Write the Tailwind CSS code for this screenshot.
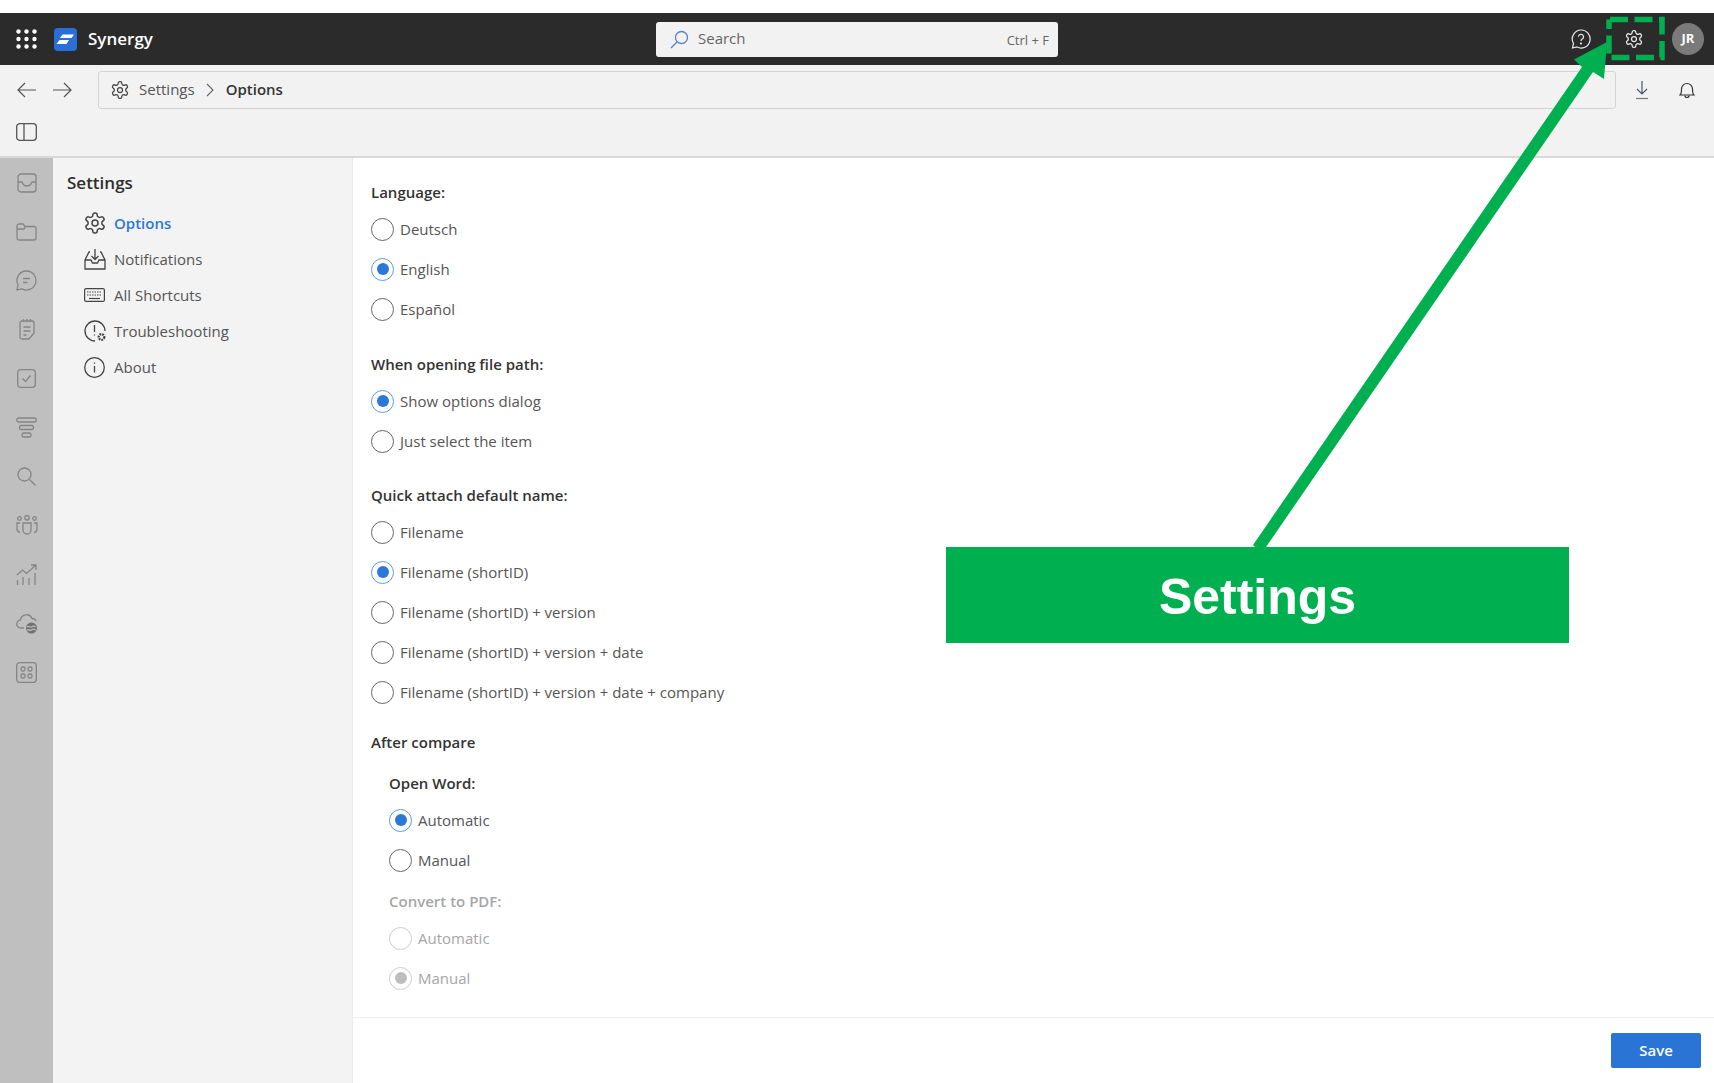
<!DOCTYPE html>
<html lang="en">
<head>
  <meta charset="UTF-8" />
  <title>Synergy Settings</title>
  <script src="https://cdn.jsdelivr.net/npm/@tailwindcss/browser@4"></script>
</head>
<body class="relative w-[1714px] h-[1083px] overflow-hidden bg-white font-['Open_Sans',sans-serif] text-[15px] text-[#555]">
  <svg class="hidden">
    <symbol id="gear" viewBox="0 0 24 24" fill="none" stroke="currentColor" stroke-width="1.5">
      <path d="M12.22 2h-.44a2 2 0 0 0-2 2v.18a2 2 0 0 1-1 1.73l-.43.25a2 2 0 0 1-2 0l-.15-.08a2 2 0 0 0-2.73.73l-.22.38a2 2 0 0 0 .73 2.73l.15.1a2 2 0 0 1 1 1.72v.51a2 2 0 0 1-1 1.74l-.15.09a2 2 0 0 0-.73 2.73l.22.38a2 2 0 0 0 2.73.73l.15-.08a2 2 0 0 1 2 0l.43.25a2 2 0 0 1 1 1.73V20a2 2 0 0 0 2 2h.44a2 2 0 0 0 2-2v-.18a2 2 0 0 1 1-1.73l.43-.25a2 2 0 0 1 2 0l.15.08a2 2 0 0 0 2.73-.73l.22-.39a2 2 0 0 0-.73-2.73l-.15-.08a2 2 0 0 1-1-1.74v-.5a2 2 0 0 1 1-1.74l.15-.09a2 2 0 0 0 .73-2.73l-.22-.38a2 2 0 0 0-2.73-.73l-.15.08a2 2 0 0 1-2 0l-.43-.25a2 2 0 0 1-1-1.73V4a2 2 0 0 0-2-2z"/>
      <circle cx="12" cy="12" r="3"/>
    </symbol>
  </svg>

  <!-- Top bar -->
  <div class="mt-[13px] h-[52px] bg-[#2b2b2b] flex items-center relative">
    <svg class="ml-[16px] w-[21px] h-[20px] text-white" viewBox="0 0 21 20" fill="currentColor">
      <circle cx="2.5" cy="2.5" r="2.2"/><circle cx="10.5" cy="2.5" r="2.2"/><circle cx="18.5" cy="2.5" r="2.2"/>
      <circle cx="2.5" cy="10" r="2.2"/><circle cx="10.5" cy="10" r="2.2"/><circle cx="18.5" cy="10" r="2.2"/>
      <circle cx="2.5" cy="17.5" r="2.2"/><circle cx="10.5" cy="17.5" r="2.2"/><circle cx="18.5" cy="17.5" r="2.2"/>
    </svg>
    <svg class="ml-[17px] w-[23px] h-[23px]" viewBox="0 0 23 23">
      <rect width="23" height="23" rx="4" fill="#2a6fd8"/>
      <path d="M8.5 6.5H20L17.5 10H6Z M5.5 12H15L12.5 16H2.5Z" fill="#fff"/>
    </svg>
    <span class="ml-[11px] text-[17px] font-semibold text-white">Synergy</span>

    <div class="absolute left-[656px] top-[9px] w-[402px] h-[35px] bg-[#f2f2f2] rounded-[3px] flex items-center pl-[14px] pr-[9px]">
      <svg class="w-[19px] h-[19px] text-[#5b7fd0]" viewBox="0 0 19 19" fill="none" stroke="currentColor" stroke-width="1.3">
        <circle cx="11.5" cy="7.5" r="6"/><path d="M7 12 1 18"/>
      </svg>
      <span class="ml-[9px] mt-[-2px] text-[#666]">Search</span>
      <span class="ml-auto mt-[3px] text-[13px] text-[#666]">Ctrl + F</span>
    </div>

    <div class="ml-auto flex items-center text-[#e8e8e8]">
      <svg class="w-[20px] h-[20px]" viewBox="0 0 20 20" fill="none" stroke="currentColor" stroke-width="1.2">
        <path d="M10 1a9 9 0 1 1-4 17l-4.5 1L2.500 14.500A9 9 0 0 1 10 1Z"/>
        <path d="M7.500 7.800a2.500 2.500 0 1 1 3.700 2.200c-.8.500-1.200 1-1.200 2"/><circle cx="10" cy="14.500" r=".5"/>
      </svg>
      <svg class="ml-[33px] w-[20px] h-[20px]"><use href="#gear"/></svg>
      <div class="ml-[28px] mr-[10px] w-[32px] h-[32px] rounded-full bg-[#7a7a7a] flex items-center justify-center text-[13px] font-bold text-white">JR</div>
    </div>
  </div>

  <!-- Address bar and toolbar -->
  <div class="h-[93px] bg-[#f2f2f2] border-b-2 border-[#d9d9d9]">
    <div class="h-[50px] flex items-center text-[#555]">
      <svg class="ml-[17px] w-[20px] h-[16px]" viewBox="0 0 20 16" fill="none" stroke="currentColor" stroke-width="1.2"><path d="M19 8H1M8 1 1 8l7 7"/></svg>
      <svg class="ml-[15px] w-[20px] h-[16px]" viewBox="0 0 20 16" fill="none" stroke="currentColor" stroke-width="1.2"><path d="M1 8h18M12 1l7 7-7 7"/></svg>
      <div class="ml-[26px] w-[1518px] h-[38px] border border-[#d4d4d4] rounded-[3px] flex items-center pl-[11px]">
        <svg class="w-[20px] h-[20px] text-[#444]"><use href="#gear"/></svg>
        <span class="ml-[9px] mt-[-1px] text-[#555]">Settings</span>
        <svg class="ml-[11px] w-[8px] h-[14px] text-[#666]" viewBox="0 0 8 14" fill="none" stroke="currentColor" stroke-width="1.1"><path d="m1 1 6 6-6 6"/></svg>
        <span class="ml-[12px] mt-[-1px] font-semibold text-[#333]">Options</span>
      </div>
      <svg class="ml-[18px] w-[16px] h-[20px] text-[#4a5670]" viewBox="0 0 16 20" fill="none" stroke="currentColor" stroke-width="1.2"><path d="M8 1v13M3 9l5 5 5-5"/><path d="M2 18.500h12" stroke="#777"/></svg>
      <svg class="ml-[29px] w-[16px] h-[20px] text-[#333]" viewBox="0 0 16 20" fill="none" stroke="currentColor" stroke-width="1.2"><path d="M1 15c1.500-1 1.500-3 1.500-6a5.500 5.500 0 0 1 11 0c0 3 0 5 1.500 6Z"/><path d="M6 15.500a2 2 0 0 0 4 0"/></svg>
    </div>
    <svg class="ml-[16px] mt-[8px] w-[21px] h-[18px] text-[#555]" viewBox="0 0 21 18" fill="none" stroke="currentColor" stroke-width="1.3"><rect x=".7" y=".7" width="19.600" height="16.600" rx="3"/><path d="M8 1v16"/></svg>
  </div>

  <div class="flex h-[925px]">
    <!-- Icon rail -->
    <div class="w-[53px] bg-[#bfbfbf] flex flex-col items-center text-[#858585]">
      <div class="h-[49px] flex items-center justify-center"><svg class="w-[20px] h-[20px]" viewBox="0 0 20 20" fill="none" stroke="currentColor" stroke-width="1.300"><rect x="1" y="1" width="18" height="18" rx="3"/><path d="M1 9h4c1 3 2.500 4 5 4s4-1 5-4h4"/></svg></div>
      <div class="h-[49px] flex items-center justify-center"><svg class="w-[21px] h-[19px]" viewBox="0 0 21 19" fill="none" stroke="currentColor" stroke-width="1.300"><path d="M1 4a2 2 0 0 1 2-2h4l2 2.500h9a2 2 0 0 1 2 2V16a2 2 0 0 1-2 2H3a2 2 0 0 1-2-2Z M1 7h7l1.500-2.500"/></svg></div>
      <div class="h-[49px] flex items-center justify-center"><svg class="w-[21px] h-[21px]" viewBox="0 0 21 21" fill="none" stroke="currentColor" stroke-width="1.300"><path d="M10.500 1a9.500 9.500 0 1 1-4.500 17.900L1 20l1.100-5A9.500 9.500 0 0 1 10.500 1Z"/><path d="M7 8.500h7M7 12.500h4.500"/></svg></div>
      <div class="h-[49px] flex items-center justify-center"><svg class="w-[16px] h-[21px]" viewBox="0 0 16 21" fill="none" stroke="currentColor" stroke-width="1.300"><path d="M3 2h10a2 2 0 0 1 2 2v10l-5 6H3a2 2 0 0 1-2-2V4a2 2 0 0 1 2-2Z M4.500 0v3M8 0v3M11.500 0v3M4.500 8h7M4.500 12h7M4.500 16h3"/></svg></div>
      <div class="h-[49px] flex items-center justify-center"><svg class="w-[19px] h-[19px]" viewBox="0 0 19 19" fill="none" stroke="currentColor" stroke-width="1.300"><rect x=".7" y=".7" width="17.600" height="17.600" rx="3"/><path d="m5.500 9.500 3 3 5-6"/></svg></div>
      <div class="h-[49px] flex items-center justify-center"><svg class="w-[21px] h-[21px]" viewBox="0 0 21 21" fill="none" stroke="currentColor" stroke-width="1.300"><rect x=".7" y="1" width="19.600" height="4" rx="2"/><rect x="3.500" y="8.500" width="14" height="4" rx="2"/><rect x="6" y="16" width="9" height="4" rx="2"/></svg></div>
      <div class="h-[49px] flex items-center justify-center"><svg class="w-[19px] h-[19px]" viewBox="0 0 19 19" fill="none" stroke="currentColor" stroke-width="1.300"><circle cx="7.500" cy="7.500" r="6.500"/><path d="m12.500 12.500 6 6"/></svg></div>
      <div class="h-[49px] flex items-center justify-center"><svg class="w-[22px] h-[21px]" viewBox="0 0 22 21" fill="none" stroke="currentColor" stroke-width="1.300"><circle cx="11" cy="2.800" r="2.200"/><circle cx="3.500" cy="3.500" r="1.800"/><circle cx="18.500" cy="3.500" r="1.800"/><path d="M7 8h8v7a4 4 0 0 1-8 0Z M4 8H1v6c0 2 1 3 3 3.500 M18 8h3v6c0 2-1 3-3 3.500"/></svg></div>
      <div class="h-[49px] flex items-center justify-center"><svg class="w-[21px] h-[22px]" viewBox="0 0 21 22" fill="none" stroke="currentColor" stroke-width="1.300"><path d="M1 11 6.500 6l4 3.500L20 1M15 1h5v5M1.500 16v5M7 13v8M13 14v7M19 9v12"/></svg></div>
      <div class="h-[49px] flex items-center justify-center"><svg class="w-[22px] h-[21px]" viewBox="0 0 22 21" fill="none" stroke="currentColor" stroke-width="1.300"><path d="M8 15H5a4 4 0 0 1-.5-8A6 6 0 0 1 16 5.500a4 4 0 0 1 4 2.500"/><circle cx="15.500" cy="15" r="5.500" fill="#707070" stroke="none"/><path d="M11 14c2-2 3 1 4.500 0s3-1 4 0M11 17c2-1 3 1 4.500 0s3-1 4 0" stroke="#bfbfbf"/></svg></div>
      <div class="h-[49px] flex items-center justify-center"><svg class="w-[21px] h-[21px]" viewBox="0 0 21 21" fill="none" stroke="currentColor" stroke-width="1.300"><rect x=".7" y=".7" width="19.600" height="19.600" rx="3"/><rect x="5" y="5" width="4" height="4" rx="1.500"/><rect x="12" y="5" width="4" height="4" rx="1.500"/><rect x="5" y="12" width="4" height="4" rx="1.500"/><rect x="12" y="12" width="4" height="4" rx="1.500"/></svg></div>
    </div>

    <!-- Settings panel -->
    <div class="w-[300px] bg-[#f3f3f3] pl-[14px] pt-[11px] border-r border-[#ececec]">
      <div class="h-[28px] flex items-center text-[17px] font-semibold text-[#2e2e2e]">Settings</div>
      <div class="mt-[8px] ml-[16px] flex flex-col">
        <div class="h-[36px] flex items-center font-semibold text-[#2b78d6]"><svg class="w-[24px] h-[24px] text-[#444]"><use href="#gear"/></svg><span class="ml-[7px]">Options</span></div>
        <div class="h-[36px] flex items-center"><svg class="ml-[1px] w-[22px] h-[22px] text-[#444] mr-[8px]" viewBox="0 0 22 22" fill="none" stroke="currentColor" stroke-width="1.300"><path d="M6 4H5L1 12v9h20v-9l-4-8h-1M1 12h6l1.500 3h5L15 12h6M11 1v10M7.500 8l3.500 3.500L14.500 8"/></svg>Notifications</div>
        <div class="h-[36px] flex items-center"><svg class="ml-[1px] w-[21px] h-[14px] text-[#444] mr-[9px]" viewBox="0 0 21 14" fill="none" stroke="currentColor" stroke-width="1.200"><rect x=".6" y=".6" width="19.800" height="12.800" rx="1.500"/><path d="M3 4h15M3 7h15" stroke-dasharray="1.500 1"/><path d="M5 10.500h11"/></svg>All Shortcuts</div>
        <div class="h-[36px] flex items-center"><svg class="ml-[1px] w-[23px] h-[22px] text-[#444] mr-[7px]" viewBox="0 0 23 22" fill="none" stroke="currentColor" stroke-width="1.300"><path d="M11 21a10 10 0 1 1 10-10M10.500 5v7M10.500 14.500v1"/><circle cx="17.500" cy="17" r="2.800" stroke-width="2.300" stroke-dasharray="1.800 .9"/></svg>Troubleshooting</div>
        <div class="h-[36px] flex items-center"><svg class="ml-[1px] w-[21px] h-[21px] text-[#444] mr-[9px]" viewBox="0 0 21 21" fill="none" stroke="currentColor" stroke-width="1.300"><circle cx="10.500" cy="10.500" r="9.800"/><path d="M10.500 9v6.500M10.500 5.500v1.300"/></svg>About</div>
      </div>
    </div>

    <!-- Options form -->
    <div class="flex-1 flex flex-col">
      <div class="flex-1 pl-[18px] pt-[17px]">
        <div class="h-[34px] flex items-center font-semibold text-[#333]">Language:</div>
        <div class="h-10 flex items-center"><span class="w-[23px] h-[23px] rounded-full border-[1.5px] border-[#666]"></span><span class="ml-[6px]">Deutsch</span></div>
        <div class="h-10 flex items-center"><span class="w-[23px] h-[23px] rounded-full border-[1.5px] border-[#5b9be8] flex items-center justify-center"><span class="w-[12px] h-[12px] rounded-full bg-[#2b78d6]"></span></span><span class="ml-[6px]">English</span></div>
        <div class="h-10 flex items-center"><span class="w-[23px] h-[23px] rounded-full border-[1.5px] border-[#666]"></span><span class="ml-[6px]">Español</span></div>

        <div class="mt-[18px] h-[34px] flex items-center font-semibold text-[#333]">When opening file path:</div>
        <div class="h-10 flex items-center"><span class="w-[23px] h-[23px] rounded-full border-[1.5px] border-[#5b9be8] flex items-center justify-center"><span class="w-[12px] h-[12px] rounded-full bg-[#2b78d6]"></span></span><span class="ml-[6px]">Show options dialog</span></div>
        <div class="h-10 flex items-center"><span class="w-[23px] h-[23px] rounded-full border-[1.5px] border-[#666]"></span><span class="ml-[6px]">Just select the item</span></div>

        <div class="mt-[17px] h-[34px] flex items-center font-semibold text-[#333]">Quick attach default name:</div>
        <div class="h-10 flex items-center"><span class="w-[23px] h-[23px] rounded-full border-[1.5px] border-[#666]"></span><span class="ml-[6px]">Filename</span></div>
        <div class="h-10 flex items-center"><span class="w-[23px] h-[23px] rounded-full border-[1.5px] border-[#5b9be8] flex items-center justify-center"><span class="w-[12px] h-[12px] rounded-full bg-[#2b78d6]"></span></span><span class="ml-[6px]">Filename (shortID)</span></div>
        <div class="h-10 flex items-center"><span class="w-[23px] h-[23px] rounded-full border-[1.5px] border-[#666]"></span><span class="ml-[6px]">Filename (shortID) + version</span></div>
        <div class="h-10 flex items-center"><span class="w-[23px] h-[23px] rounded-full border-[1.5px] border-[#666]"></span><span class="ml-[6px]">Filename (shortID) + version + date</span></div>
        <div class="h-10 flex items-center"><span class="w-[23px] h-[23px] rounded-full border-[1.5px] border-[#666]"></span><span class="ml-[6px]">Filename (shortID) + version + date + company</span></div>

        <div class="mt-[13px] h-[34px] flex items-center font-semibold text-[#333]">After compare</div>
        <div class="ml-[18px]">
          <div class="mt-[7px] h-[34px] flex items-center font-semibold text-[#333]">Open Word:</div>
          <div class="h-10 flex items-center"><span class="w-[23px] h-[23px] rounded-full border-[1.5px] border-[#5b9be8] flex items-center justify-center"><span class="w-[12px] h-[12px] rounded-full bg-[#2b78d6]"></span></span><span class="ml-[6px]">Automatic</span></div>
          <div class="h-10 flex items-center"><span class="w-[23px] h-[23px] rounded-full border-[1.5px] border-[#666]"></span><span class="ml-[6px]">Manual</span></div>
          <div class="mt-[4px] h-[34px] flex items-center font-semibold text-[#a6a6a6]">Convert to PDF:</div>
          <div class="h-10 flex items-center text-[#a6a6a6]"><span class="w-[23px] h-[23px] rounded-full border-[1.5px] border-[#ccc]"></span><span class="ml-[6px]">Automatic</span></div>
          <div class="h-10 flex items-center text-[#a6a6a6]"><span class="w-[23px] h-[23px] rounded-full border-[1.5px] border-[#ccc] flex items-center justify-center"><span class="w-[12px] h-[12px] rounded-full bg-[#bdbdbd]"></span></span><span class="ml-[6px]">Manual</span></div>
        </div>
      </div>
      <div class="h-[66px] border-t border-[#eeeeee] flex items-start justify-end pr-[13px] pt-[15px]">
        <button class="w-[90px] h-[35px] bg-[#2a74d6] rounded-[2px] font-semibold text-white">Save</button>
      </div>
    </div>
  </div>

  <!-- Callout laid over the screenshot -->
  <svg class="absolute left-0 top-0 pointer-events-none" width="1714" height="1083" viewBox="0 0 1714 1083" fill="none">
    <path d="M1610 19.500H1662V57.500H1609V19.500" stroke="#00b050" stroke-width="5.500" stroke-dasharray="18 6.500"/>
    <path d="M1253 545 1582 67 1574 59.500 1607 42 1604 79 1593 72 1266 547 1258 550Z" fill="#00b050"/>
  </svg>
  <div class="absolute left-[946px] top-[547px] w-[623px] h-[96px] pt-[4px] bg-[#00b050] flex items-center justify-center font-['Liberation_Sans',sans-serif] text-[50px] font-bold text-white">Settings</div>
</body>
</html>
